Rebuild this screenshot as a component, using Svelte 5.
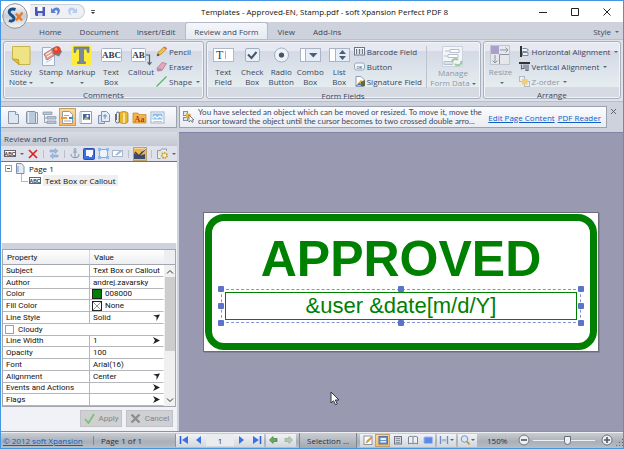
<script>
  const tabs = ['Home', 'Document', 'Insert/Edit', 'Review and Form', 'View', 'Add-Ins'];
  let activeTab = $state('Review and Form');

  const comments = [
    { icon: 'sticky', lines: ['Sticky', 'Note'], menu: true },
    { icon: 'stamp', lines: ['Stamp', ''], menu: true },
    { icon: 'markup', lines: ['Markup', ''], menu: true },
    { icon: 'textbox', lines: ['Text', 'Box'] },
    { icon: 'callout', lines: ['Callout', ''] }
  ];
  const drawing = [
    { icon: 'pencil', label: 'Pencil' },
    { icon: 'eraser', label: 'Eraser' },
    { icon: 'shape', label: 'Shape', menu: true }
  ];
  const fields = [
    { icon: 'textfield', lines: ['Text', 'Field'] },
    { icon: 'checkfield', lines: ['Check', 'Box'] },
    { icon: 'radiofield', lines: ['Radio', 'Button'] },
    { icon: 'combofield', lines: ['Combo', 'Box'] },
    { icon: 'listfield', lines: ['List', 'Box'] }
  ];
  const moreFields = [
    { icon: 'barcode', label: 'Barcode Field' },
    { icon: 'okbutton', label: 'Button' },
    { icon: 'signature', label: 'Signature Field' }
  ];
  const arrange = [
    { icon: 'halign', label: 'Horizontal Alignment', menu: true },
    { icon: 'valign', label: 'Vertical Alignment', menu: true },
    { icon: 'zorder', label: 'Z-order', menu: true, disabled: true }
  ];
  const panes = ['page', 'book', 'outline', 'review', 'picture', 'copies', 'attach', 'fonts', 'signed'];
  const properties = [
    { name: 'Subject', value: 'Text Box or Callout' },
    { name: 'Author', value: 'andrej.zavarsky' },
    { name: 'Color', value: '008000', swatch: 'green' },
    { name: 'Fill Color', value: 'None', swatch: 'none' },
    { name: 'Line Style', value: 'Solid', options: ['Solid', 'Dashed'] },
    { name: 'Cloudy', check: true },
    { name: 'Line Width', value: '1', more: true },
    { name: 'Opacity', value: '100' },
    { name: 'Font', value: 'Arial(16)' },
    { name: 'Alignment', value: 'Center', options: ['Left', 'Center', 'Right'] },
    { name: 'Events and Actions', value: '', more: true },
    { name: 'Flags', value: '', more: true }
  ];
  const views = ['vedit', 'vfit', 'vpage', 'vbook', 'vfull'];
  const handles = ['nw', 'n', 'ne', 'w', 'e', 'sw', 's', 'se'];
  let page = $state('1');
  let zoom = $state(57);
</script>

{#snippet icon(name, w, h)}
  <svg class="icon" width={w} height={h} viewBox="0 0 {w} {h}" aria-hidden="true">
    {#if name === 'sticky'}
      <path d="M1.500 1.500h17.500v18H8L1.500 14z" fill="#f0e384" stroke="#c9b44c" />
      <path d="M1.500 14l6 .5.5 5z" fill="#e0bd35" stroke="#b39523" stroke-width=".7" />
    {:else if name === 'stamp'}
      <path d="M1.500 2.500h8l4 4v14h-12z" fill="#f4f8fc" stroke="#9db0c6" />
      <path d="M4 14.500l7-4M5 17.500l6-3.500" stroke="#b9c8da" />
      <path d="M3 9l8-5 3 6-8 5z" fill="#e9a193" stroke="#b3675a" stroke-width=".8" />
      <path d="M5 9.500l5-3M6 12l5-3" stroke="#fff" />
      <path d="M11 3l6-1.500 4 5-3 5-6-2.500z" fill="#75798a" />
      <circle cx="16" cy="5" r="3.700" fill="#e5442a" />
      <circle cx="15" cy="4" r="1.500" fill="#ff8d6d" />
    {:else if name === 'markup'}
      <path d="M.5.500h20v20h-20z" fill="#ffec3a" />
      <path d="M3 2h15v5.500h-1.500l-1-3.500h-3v12.500l2 .5v1.500h-8V17l2-.5V4h-3l-1 3.500H3z" fill="#7a8a9c" stroke="#5b6a7c" stroke-width=".6" />
    {:else if name === 'textbox'}
      <rect x=".5" y="3.500" width="20" height="13" rx="1" fill="#fff" stroke="#a9b4c6" />
      <text x="10.500" y="13" text-anchor="middle" class="glyph">ABC</text>
    {:else if name === 'callout'}
      <rect x=".5" y="3.500" width="14" height="13" rx="1" fill="#fff" stroke="#a9b4c6" />
      <text x="7.500" y="13" text-anchor="middle" class="glyph">AB</text>
      <path d="M15 10h3.500v9M16.500 17l2 2.500 2-2.500" fill="none" stroke="#4b607f" stroke-width="1.200" />
    {:else if name === 'pencil'}
      <path d="M1 10l1-3.500L8 1l2.500 2L4 9z" fill="#f5c33b" stroke="#a77b2c" stroke-width=".7" />
      <path d="M7.500 1.500L9 .5l2 2-1 1z" fill="#d9607a" />
      <path d="M1 10l1-2.500 1.500 1.500z" fill="#3f2f2f" />
    {:else if name === 'eraser'}
      <path d="M1 7l5-5.500 4.500 1L6 9.500 1.500 10z" fill="#e0a6bd" stroke="#a3778f" stroke-width=".7" />
      <path d="M1 7l4 .5L6 9.500 1.500 10z" fill="#b98ba5" />
    {:else if name === 'shape'}
      <path d="M.5 10.500l10-10" stroke="#58b368" stroke-width="1.300" />
    {:else if name === 'textfield'}
      <rect x=".5" y="3.500" width="20" height="13" fill="#fff" stroke="#b0b9c9" />
      <text x="3" y="14" class="glyph t">T</text>
      <path d="M12.500 6v8" stroke="#8c98ab" stroke-width=".8" />
    {:else if name === 'checkfield'}
      <rect x="3.500" y="3.500" width="14" height="13" rx="1.500" fill="#eaf0f8" stroke="#a3aec2" />
      <path d="M6 9.500l3.500 3.500 5-6" fill="none" stroke="#44546e" stroke-width="2" />
    {:else if name === 'radiofield'}
      <circle cx="10.500" cy="10" r="7" fill="#eef3f9" stroke="#a3aec2" />
      <circle cx="10.500" cy="10" r="2.600" fill="#44546e" />
    {:else if name === 'combofield'}
      <rect x=".5" y="3.500" width="20" height="13" fill="#fff" stroke="#aab4c6" />
      <path d="M5.500 3.500h15v13h-15z" fill="#e6edf7" stroke="#aab4c6" />
      <path d="M9 8h8.500l-4.200 4.500z" fill="#4b5d7c" />
    {:else if name === 'listfield'}
      <rect x=".5" y="3.500" width="20" height="13" fill="#fff" stroke="#aab4c6" />
      <path d="M6.500 3.500h14v13h-14z" fill="#e6edf7" stroke="#aab4c6" />
      <path d="M10 9h7l-3.500-4zM10 11h7l-3.500 4z" fill="#4b5d7c" />
    {:else if name === 'barcode'}
      <rect x=".5" y="1.500" width="10" height="7.500" fill="#f5f7fa" stroke="#6d7688" />
      <path d="M2.500 3v5M5.500 3v5M8.500 3v5" stroke="#6d7688" />
      <path d="M4 3v5M7 3v5" stroke="#9ba4b4" stroke-width=".6" />
    {:else if name === 'okbutton'}
      <rect x=".5" y="2" width="10" height="7" rx="2" fill="#f4f7fb" stroke="#9ba7ba" />
      <text x="5.500" y="7.500" text-anchor="middle" class="tiny">OK</text>
    {:else if name === 'signature'}
      <path d="M2 .5h5l3 3v7H2z" fill="#fff" stroke="#8f9bb0" />
      <path d="M3 8l4-4 3 2-3 4z" fill="#e8a72c" />
      <path d="M1 10l5-3 1 2z" fill="#3a6bb3" />
      <path d="M7 6l4-2v6H7z" fill="#5a6a45" />
    {:else if name === 'manage'}
      <rect x=".5" y=".5" width="20" height="20" fill="#f3f5f9" stroke="#ccd2dd" />
      <path d="M8 3.500h9v3H8zM6 8.500h10v3H6zM3 5h5M2 10h4" fill="#fff" stroke="#b8bfcc" />
      <path d="M2 15.500h9v3H2z" fill="#dde2ea" stroke="#b8bfcc" />
      <path d="M10 16a3.500 3 0 0 1 6-2M19 15a3.500 3 0 0 1-6 3" fill="none" stroke="#9ccb98" stroke-width="2" />
    {:else if name === 'resize'}
      <rect x=".5" y=".5" width="19" height="19" fill="#e4e7ec" stroke="#c0c5ce" />
      <rect x="1" y="1" width="8" height="8" fill="#aba0cc" />
      <path d="M10 5h8M15.500 2.500L18 5l-2.500 2.500M5 10v8M2.500 15.500L5 18l2.500-2.500M9.500 19v-9.500H19" fill="none" stroke="#8d95a3" />
    {:else if name === 'halign'}
      <path d="M1 0h2v11H1z" fill="#333" />
      <path d="M3.500 2.500h4l2 1.500-2 1.500h-4M3.500 6.500h5.500v3H3.500z" fill="#eef2f7" stroke="#7c889c" />
    {:else if name === 'valign'}
      <path d="M0 1h11v2H0z" fill="#333" />
      <path d="M2.500 3.500v5M5 3.500v4h-3M7 3.500v6h2v-6" fill="none" stroke="#626c7d" stroke-width="1.200" />
    {:else if name === 'zorder'}
      <rect x=".5" y=".5" width="5" height="5" fill="#ebeef3" stroke="#b3bac6" />
      <rect x="5.500" y="5.500" width="5" height="5" fill="#ebeef3" stroke="#b3bac6" />
      <rect x="3" y="3" width="5.500" height="5.500" fill="#f0ce7d" />
    {:else if name === 'save'}
      <path d="M0 1h10v9H1L0 9z" fill="#4c57bd" />
      <path d="M2.500 1h5v4h-5z" fill="#fff" />
      <path d="M3 7h4.500v3H3z" fill="#cfd5ef" />
    {:else if name === 'undo'}
      <path d="M0 2v5h5L3.400 5.200C5 3.500 7 4.500 6.500 6.500L5.500 9.500C10 7.500 10 1.500 5.500 1.500 4 1.500 2.500 2.300 1.800 3.500z" fill="#5a82d6" />
    {:else if name === 'redo'}
      <path d="M10 2v5H5l1.600-1.800C5 3.500 3 4.500 3.500 6.500l1 3C0 7.500 0 1.500 4.500 1.500 6 1.500 7.500 2.300 8.200 3.500z" fill="#b5cdee" />
    {:else if name === 'page'}
      <path d="M2.500 1.500h7l3 3v9h-10z" fill="#dde6f1" stroke="#8796ad" />
      <path d="M9.500 1.500v3h3" fill="#fff" stroke="#8796ad" />
    {:else if name === 'book'}
      <rect x="2.500" y="1.500" width="9" height="12" rx="1" fill="#b9cadd" stroke="#7f90a8" />
      <path d="M11.500 2.500h2v11h-9" fill="none" stroke="#8a98ac" />
      <path d="M4.500 2v11" stroke="#e6eef6" />
    {:else if name === 'outline'}
      <path d="M1 2h9v2.500H1zM5 6.500h9V9H5zM5 11h9v2.500H5z" fill="#b9c5d5" stroke="#8593a9" stroke-width=".7" />
      <path d="M2.500 5v7.500H5M2.500 8H5" fill="none" stroke="#8593a9" stroke-width=".8" />
    {:else if name === 'review'}
      <path d="M2.500 1.500h7l3 3v9h-10z" fill="#fff" stroke="#9099aa" />
      <path d="M4 5.500h5M4 11h7" stroke="#9aa7bd" />
      <path d="M1 7h6v2H1z" fill="#ef9d28" />
      <path d="M9 7h4v2H9z" fill="#4b7fc6" />
    {:else if name === 'picture'}
      <path d="M2.500 1.500h11v12h-11z" fill="#fff" stroke="#8f9db2" />
      <path d="M1 2h3v11H1z" fill="#c8d5e4" />
      <rect x="5" y="4" width="7" height="6" fill="#416aa3" />
      <path d="M5 10l3-3 4 3z" fill="#c9b074" />
      <circle cx="9.500" cy="6" r="1.200" fill="#fff" />
    {:else if name === 'copies'}
      <path d="M2.500 5.500h6v8h-6z" fill="#d3e0ee" stroke="#7e93b0" />
      <path d="M5.500 1.500h5l3 3v7h-8z" fill="#e4eef8" stroke="#7e93b0" />
      <path d="M9 4v5M7 6h4" stroke="#6d8cb5" />
    {:else if name === 'attach'}
      <path d="M5 3c3-2 7-2 9 0v9c-2 2-6 2-9 0z" fill="#eab62f" stroke="#a97c1c" stroke-width=".7" />
      <path d="M10 3v10" stroke="#fbe49a" stroke-width="2" />
      <path d="M1.500 4v7a2 2 0 0 0 4 0V3.500a1.500 1.500 0 0 0-3 0V10" fill="none" stroke="#5f7390" />
    {:else if name === 'fonts'}
      <path d="M1 3h5l1 1.500h7V13H1z" fill="#f3b347" stroke="#c58323" stroke-width=".7" />
      <text x="7.500" y="11.500" text-anchor="middle" class="font">Aa</text>
    {:else if name === 'signed'}
      <rect x="1" y="2" width="13" height="11" fill="#fff" stroke="#9fb2c8" />
      <rect x="2.500" y="3.500" width="10" height="6" fill="#8fbdec" />
      <path d="M3 8l2-2 2 2 3-2 2 2" fill="none" stroke="#fff" stroke-width="1.200" />
      <path d="M3 11.500h9" stroke="#b9c6d6" />
    {:else if name === 'hint'}
      <rect x=".5" y=".5" width="4" height="4" fill="#dfe5ee" stroke="#8190a6" />
      <rect x=".5" y="6.500" width="4" height="3" fill="#dfe5ee" stroke="#8190a6" />
      <path d="M3 2l5 1-1 5-4-1z" fill="#e9b54a" />
      <path d="M6 4v7l1.800-1.500 1.500 2 .9-.6-1.300-2h2z" fill="#fff" stroke="#4d5768" stroke-width=".7" />
    {:else if name === 'abc'}
      <rect x=".5" y="1.500" width="11" height="6" fill="#fff" stroke="#626873" />
      <text x="6" y="6.500" text-anchor="middle" class="mini">ABC</text>
    {:else if name === 'delete'}
      <path d="M1 1l8 8M9 1L1 9" stroke="#d9241f" stroke-width="1.700" />
    {:else if name === 'swap'}
      <path d="M1 2h5V.5L9 3 6 5.500V4H1zM9 7H4V5.500L1 8l3 2.500V9h5z" fill="#9fbbe0" stroke="#7d9cc6" stroke-width=".5" />
    {:else if name === 'anchor'}
      <path d="M5 2.500V10M3 4h4M1 6c0 5 8 5 8 0" fill="none" stroke="#8e9db5" stroke-width="1.100" />
      <circle cx="5" cy="1.500" r="1" fill="none" stroke="#8e9db5" />
    {:else if name === 'note'}
      <rect x=".5" y=".5" width="11" height="11" rx="1" fill="#3e6fe0" stroke="#2a50b4" />
      <path d="M3 2h7v5H9v2H6V8H3z" fill="#f5f8ff" />
    {:else if name === 'select'}
      <rect x="1.500" y="1.500" width="8" height="8" fill="#edf5fc" stroke="#7fb0dd" />
      <path d="M0 0h3v3H0zM8 0h3v3H8zM0 8h3v3H0zM8 8h3v3H8z" fill="#94bce2" />
    {:else if name === 'editfield'}
      <rect x=".5" y="2.500" width="10" height="6" fill="#fff" stroke="#a8b7cc" />
      <path d="M3 7l5-5 2 1.500-5 4z" fill="#a6bbd9" />
    {:else if name === 'format'}
      <path d="M0 1h12v10H0z" fill="#f2b445" />
      <path d="M0 5l5 3 6-2v5H0z" fill="#3d4a6b" />
      <path d="M1 4l4 4L11 1" fill="none" stroke="#27406f" stroke-width="1.500" />
      <path d="M8 3l3-2" stroke="#fff3c8" />
    {:else if name === 'options'}
      <path d="M.5 2.500h3l1-1.500h5v2M.5 2.500v8h3" fill="#f6f1d8" stroke="#8e9aac" />
      <circle cx="7.500" cy="7.500" r="2.500" fill="#f9efc4" stroke="#c99417" stroke-width="1.600" stroke-dasharray="1.500 .7" />
    {:else if name === 'leaf'}
      <path d="M.5.500h5l2.500 3v7H.5z" fill="#e4edf6" stroke="#7f8fa6" />
      <path d="M2 3v6" stroke="#9cb6d4" stroke-width="1.500" />
    {:else if name === 'apply'}
      <path d="M1 6l3.500 4L10 1" fill="none" stroke="#7cc277" stroke-width="1.800" />
    {:else if name === 'cancel'}
      <path d="M1.500 1.500l8 8M9.500 1.500l-8 8" stroke="#8e8e8e" stroke-width="2.400" />
    {:else if name === 'first'}
      <path d="M1.500 1v8" stroke="#2d62d6" stroke-width="1.600" /><path d="M9 1v8L3 5z" fill="#3a72e4" />
    {:else if name === 'prev'}
      <path d="M7 1v8L2 5z" fill="#3a72e4" />
    {:else if name === 'next'}
      <path d="M2 1v8l5-4z" fill="#3a72e4" />
    {:else if name === 'last'}
      <path d="M8.500 1v8" stroke="#2d62d6" stroke-width="1.600" /><path d="M1 1v8l6-4z" fill="#3a72e4" />
    {:else if name === 'back'}
      <path d="M.5 5L4 1.500v2h4v3H4v2z" fill="#69a865" stroke="#40793d" stroke-width=".7" />
    {:else if name === 'forward'}
      <path d="M8.500 5L5 1.500v2H1v3h4v2z" fill="#b5ccb4" stroke="#92ab91" stroke-width=".7" />
    {:else if name === 'vedit'}
      <rect x="1" y="1" width="8" height="8.500" fill="#fff" stroke="#8b93a0" />
      <path d="M3 8l1-2.500L8 2l1 1-4 4z" fill="#e3a233" stroke="#9c6b33" stroke-width=".4" />
    {:else if name === 'vfit'}
      <rect x="1" y="1.500" width="8.500" height="7.500" fill="#6d93cc" stroke="#55739f" />
      <path d="M2.500 3h5.500v2H2.500zM2.500 6h5.500v1.500H2.500z" fill="#e5effb" />
    {:else if name === 'vpage'}
      <rect x="1.500" y="1.500" width="7" height="7.500" fill="#d0d5dc" stroke="#6d7583" />
      <path d="M3 3.500h4M3 5.500h4M3 7.500h4" stroke="#8b93a0" />
    {:else if name === 'vbook'}
      <path d="M.5 2c2-1 3.500-1 4.500 0 1-1 2.500-1 4.500 0v7c-2-1-3.500-1-4.500 0-1-1-2.500-1-4.500 0zM5 2v7" fill="#edf0f5" stroke="#7a8492" />
    {:else if name === 'vfull'}
      <rect x="1" y="2" width="8.500" height="6.500" rx="1" fill="#5c8ae8" stroke="#9bb8f0" />
    {:else if name === 'width'}
      <path d="M1.500 1v8M8.500 1v8" stroke="#6d8fc0" stroke-width="1.400" /><path d="M3 4h4v2.500H3z" fill="#a4bcdc" />
    {:else if name === 'loupe'}
      <circle cx="4.500" cy="4" r="3.300" fill="#d8e8fa" stroke="#7a92b4" />
      <path d="M7 6.500l2.500 3" stroke="#c49330" stroke-width="1.800" />
    {:else if name === 'minus'}
      <circle cx="6" cy="6" r="5" fill="#eceef1" stroke="#6e757f" /><path d="M3 6h6" stroke="#505761" stroke-width="1.600" />
    {:else if name === 'plus'}
      <circle cx="6" cy="6" r="5" fill="#eceef1" stroke="#6e757f" /><path d="M3 6h6M6 3v6" stroke="#505761" stroke-width="1.600" />
    {:else if name === 'grip'}
      <path d="M6 0h1v1H6zM3 3h1v1H3zM6 3h1v1H6zM0 6h1v1H0zM3 6h1v1H3zM6 6h1v1H6z" fill="#62676f" />
    {/if}
  </svg>
{/snippet}

{#snippet bigButton(item)}
  <button class="big" class:disabled={item.disabled}>
    {@render icon(item.icon, 21, 21)}
    <span>{item.lines[0]}</span>
    <span>{item.lines[1]}{#if item.menu}<i class="caret"></i>{/if}</span>
  </button>
{/snippet}

{#snippet smallButton(item)}
  <button class="small" class:disabled={item.disabled}>
    {@render icon(item.icon, 11, 11)}
    <span>{item.label}</span>
    {#if item.menu}<i class="caret"></i>{/if}
  </button>
{/snippet}

<div class="app">
  <header class="title">
    <button class="orb" aria-label="Application menu">
      <svg width="26" height="26" viewBox="0 0 26 26">
        <defs>
          <linearGradient id="orb" x1="0" y1="0" x2="0" y2="1">
            <stop offset="0" stop-color="#fff" />
            <stop offset=".5" stop-color="#c9ccd2" />
            <stop offset="1" stop-color="#f4f5f7" />
          </linearGradient>
        </defs>
        <circle cx="13" cy="13" r="12.300" fill="url(#orb)" stroke="#8b9099" />
        <path d="M13.500 6.500c-4-1.500-7 .5-6 3.500 1 2.500 5 3 4.500 6-.5 2-3 2.500-5 1.500" fill="none" stroke="#17518e" stroke-width="3" />
        <path d="M14 10.500l6 7M20.500 9.500l-6.500 8" stroke="#ee7a25" stroke-width="2.400" />
      </svg>
    </button>
    <div class="quick">
      <button aria-label="Save">{@render icon('save', 10, 11)}</button>
      <button aria-label="Undo">{@render icon('undo', 10, 11)}</button>
      <button aria-label="Redo">{@render icon('redo', 10, 11)}</button>
    </div>
    <button class="overflow" aria-label="Customize toolbar"><i class="caret"></i></button>
    <h1>Templates - Approved-EN, Stamp.pdf - soft Xpansion Perfect PDF 8</h1>
    <div class="window">
      <button aria-label="Minimize"><svg width="8" height="8"><path d="M0 4.500h8" stroke="#222" /></svg></button>
      <button aria-label="Maximize"><svg width="8" height="8"><path d="M.5.500h7v7h-7z" fill="none" stroke="#222" /></svg></button>
      <button aria-label="Close"><svg width="8" height="8"><path d="M.5.500l7 7M7.500.500l-7 7" stroke="#222" /></svg></button>
    </div>
  </header>

  <nav class="tabs">
    {#each tabs as tab}
      <button class:active={tab === activeTab} onclick={() => (activeTab = tab)}>{tab}</button>
    {/each}
    <button class="style">Style <i class="caret"></i></button>
  </nav>

  <div class="ribbon">
    <section class="comments">
      <div class="tools">
        {#each comments as item}{@render bigButton(item)}{/each}
        <div class="stack">{#each drawing as item}{@render smallButton(item)}{/each}</div>
      </div>
      <h2>Comments</h2>
    </section>
    <section class="fields">
      <div class="tools">
        {#each fields as item}{@render bigButton(item)}{/each}
        <div class="stack">{#each moreFields as item}{@render smallButton(item)}{/each}</div>
        <div class="manage">{@render bigButton({ icon: 'manage', lines: ['Manage', 'Form Data'], menu: true, disabled: true })}</div>
      </div>
      <h2>Form Fields</h2>
    </section>
    <section class="arrange">
      <div class="tools">
        {@render bigButton({ icon: 'resize', lines: ['Resize', ''], menu: true, disabled: true })}
        <div class="stack">{#each arrange as item}{@render smallButton(item)}{/each}</div>
      </div>
      <h2>Arrange</h2>
    </section>
  </div>

  <div class="body">
    <aside>
      <div class="panes">
        {#each panes as pane}
          <button class:on={pane === 'review'} aria-label={pane}>{@render icon(pane, 15, 15)}</button>
        {/each}
      </div>
      <div class="side">
        <h2>Review and Form</h2>
        <div class="actions">
          <button aria-label="Text box">{@render icon('abc', 12, 9)}</button>
          <i class="caret"></i>
          <button aria-label="Delete">{@render icon('delete', 10, 10)}</button>
          <i class="bar"></i>
          <button aria-label="Swap">{@render icon('swap', 10, 11)}</button>
          <i class="bar"></i>
          <button aria-label="Anchor">{@render icon('anchor', 10, 11)}</button>
          <button aria-label="Note">{@render icon('note', 12, 12)}</button>
          <button aria-label="Select">{@render icon('select', 11, 11)}</button>
          <button aria-label="Edit field">{@render icon('editfield', 11, 11)}</button>
          <i class="bar"></i>
          <button class="on" aria-label="Format">{@render icon('format', 12, 12)}</button>
          <i class="bar"></i>
          <button aria-label="Options">{@render icon('options', 11, 11)}</button>
          <i class="caret"></i>
        </div>
        <ul class="tree">
          <li><i class="fold"></i>{@render icon('leaf', 9, 11)}<span>Page 1</span></li>
          <li class="child"><i class="elbow"></i>{@render icon('abc', 12, 9)}<span class="picked">Text Box or Callout</span></li>
        </ul>
        <div class="grid">
          <table>
            <thead><tr><th>Property</th><th>Value</th></tr></thead>
            <tbody>
              {#each properties as row}
                <tr>
                  {#if row.check}
                    <td colspan="2"><label class="cell"><input type="checkbox" />{row.name}</label></td>
                  {:else}
                    <td>{row.name}</td>
                    <td>
                      <div class="cell">
                        {#if row.swatch}<i class="swatch {row.swatch}"></i>{/if}
                        {#if row.options}
                          <select aria-label={row.name} value={row.value}>
                            {#each row.options as option}<option>{option}</option>{/each}
                          </select>
                          <svg class="mark" width="7" height="7"><path d="M0 1.500l7-1L3.500 7V3z" fill="#222" /></svg>
                        {:else}
                          <span>{row.value}</span>
                        {/if}
                        {#if row.more}
                          <button class="mark" aria-label="Edit {row.name}"><svg width="7" height="7"><path d="M0 0l7 3.500L0 7l2-3.500z" fill="#222" /></svg></button>
                        {/if}
                      </div>
                    </td>
                  {/if}
                </tr>
              {/each}
            </tbody>
          </table>
          <div class="scroll">
            <svg width="6" height="4"><path d="M0 3.500l3-3 3 3" fill="none" stroke="#333" /></svg>
            <i></i>
            <svg width="6" height="4"><path d="M0 .5l3 3 3-3" fill="none" stroke="#333" /></svg>
          </div>
        </div>
        <div class="confirm">
          <button>{@render icon('apply', 11, 11)}Apply</button>
          <button>{@render icon('cancel', 11, 11)}Cancel</button>
        </div>
      </div>
    </aside>

    <main>
      <div class="notice">
        <div class="message">
          {@render icon('hint', 12, 12)}
          <p>You have selected an object which can be moved or resized. To move it, move the<br />cursor toward the object until the cursor becomes to two crossed double arro...</p>
          <a href="#edit">Edit Page Content</a>
          <a href="#reader">PDF Reader</a>
        </div>
        <button aria-label="Dismiss"><svg width="5" height="5"><path d="M0 0l5 5M5 0L0 5" stroke="#5d6470" /></svg></button>
      </div>
      <div class="canvas">
        <div class="sheet">
          <div class="stamp">
            <strong>APPROVED</strong>
            <div class="selection">
              <div class="text">&amp;user &amp;date[m/d/Y]</div>
              {#each handles as h}<i class="handle {h}"></i>{/each}
            </div>
          </div>
        </div>
        <svg class="pointer" width="10" height="15" viewBox="0 0 10 15"><path d="M1 1v11l2.500-2.200 2 4 1.800-.9-2-3.900H9z" fill="#fff" stroke="#33333f" /></svg>
      </div>
    </main>
  </div>

  <footer>
    <div class="copy"><a href="#about">© 2012 soft Xpansion</a></div>
    <div class="count">Page 1 of 1</div>
    <div class="group nav">
      <button aria-label="First page">{@render icon('first', 10, 10)}</button>
      <button aria-label="Previous page">{@render icon('prev', 10, 10)}</button>
      <input type="text" aria-label="Page number" bind:value={page} />
      <button aria-label="Next page">{@render icon('next', 10, 10)}</button>
      <button aria-label="Last page">{@render icon('last', 10, 10)}</button>
    </div>
    <div class="group">
      <button aria-label="Back">{@render icon('back', 9, 10)}</button>
      <button aria-label="Forward">{@render icon('forward', 9, 10)}</button>
    </div>
    <div class="mode">Selection ...</div>
    <div class="group views">
      {#each views as view}
        <button class:on={view === 'vfit'} aria-label={view}>{@render icon(view, 10, 10)}</button>
      {/each}
    </div>
    <div class="group menu"><button aria-label="Fit width">{@render icon('width', 10, 10)}<i class="caret"></i></button></div>
    <div class="group menu"><button aria-label="Zoom tool">{@render icon('loupe', 10, 10)}<i class="caret"></i></button></div>
    <div class="zoom">
      <output for="zoom">150%</output>
      <button aria-label="Zoom out">{@render icon('minus', 12, 12)}</button>
      <input id="zoom" type="range" aria-label="Zoom" min="0" max="100" bind:value={zoom} />
      <button aria-label="Zoom in">{@render icon('plus', 12, 12)}</button>
      {@render icon('grip', 7, 7)}
    </div>
  </footer>
</div>

<style>
  :global(body) { background: #ced2dc; }
  .app, .app * { box-sizing: border-box; }
  .app {
    display: flex;
    flex-direction: column;
    min-height: 100vh;
    border: 1px solid #4596e2;
    background: #ced2dc;
    color: #3a475c;
    font: 8px/9px "Open Sans", "Noto Sans", sans-serif;
  }
  button, input, select { margin: 0; padding: 0; border: 0; background: none; color: inherit; font: inherit; }
  h1, h2, p, ul { margin: 0; padding: 0; font-weight: 400; list-style: none; }
  h1, h2 { font-size: 8px; }
  svg { display: block; flex: none; overflow: visible; }
  a { color: #0f5fc8; }
  .glyph { font: bold 9px "Liberation Serif", serif; fill: #2f3a4c; }
  .glyph.t { font-size: 12px; font-weight: 400; }
  .tiny { font: bold 4px "Liberation Sans", sans-serif; fill: #67758e; }
  .mini { font: bold 5px "Liberation Sans", sans-serif; fill: #333; }
  .font { font: bold 8px "Liberation Serif", serif; fill: #b23a1c; }
  .caret { display: inline-block; flex: none; border: 2px solid transparent; border-top-color: #5c6678; border-bottom: 0; vertical-align: middle; margin-left: 2px; }

  .title { position: relative; display: flex; align-items: center; height: 21px; padding-left: 29px; background: #fff; color: #111; }
  .orb { position: absolute; left: 1px; top: 2px; z-index: 2; }
  .quick { display: flex; align-items: center; gap: 6px; height: 15px; padding: 0 7px 0 4px; border: 1px solid #c9cdd6; border-left-color: transparent; border-radius: 0 8px 8px 0; background: #eef0f4; }
  .overflow { margin-left: 6px; padding-top: 1px; border-top: 1px solid #555; line-height: 3px; }
  .overflow .caret { margin: 0; display: block; border-top-color: #333; }
  h1 { flex: 1; text-align: center; padding-left: 15px; }
  .window { display: flex; gap: 24px; padding-right: 12px; }

  .tabs { display: flex; align-items: stretch; height: 17px; padding-left: 29px; }
  .tabs button { padding: 0 8px; border: 1px solid transparent; border-bottom: 0; }
  .tabs button.active { border-color: #b4bac8; border-radius: 3px 3px 0 0; background: linear-gradient(#f4f6fa, #e6eaf2); margin: 0 1px; }
  .tabs .style { margin-left: auto; padding: 0 3px; }

  .ribbon { display: flex; gap: 2px; height: 63px; padding: 1px 2px 2px; border-top: 1px solid #b9bfcb; background: #dfe2e8; border-bottom: 1px solid #b9bec8; }
  .ribbon section { display: flex; flex-direction: column; border: 1px solid #a9b0be; border-radius: 3px; box-shadow: inset 0 0 0 1px #f2f4f8; background: linear-gradient(#e6e9f1 0 16%, #d4d9e5 17%, #e5edf0 80%, #d6dae3 81%); }
  .comments { flex: 201; }
  .fields { flex: 276; }
  .arrange { flex: 138; }
  .tools { display: flex; flex: 1; padding: 1px 0 0 2px; }
  .ribbon h2 { height: 12px; text-align: center; line-height: 11px; }
  .big { display: flex; flex-direction: column; align-items: center; justify-content: flex-start; width: 30px; padding-top: 2px; line-height: 10px; white-space: nowrap; }
  .big .icon { margin-bottom: 1px; }
  .big span { height: 10px; }
  .fields .big { width: 29px; }
  .disabled { color: #8e97a7; }
  .stack { display: flex; flex-direction: column; padding-top: 1px; white-space: nowrap; }
  .small { display: flex; align-items: center; gap: 2px; height: 15px; }
  .manage { margin: 3px 0 2px 4px; padding-left: 6px; border-left: 1px solid #bcc2ce; }
  .manage .big { width: 40px; padding: 0; }
  .arrange .stack { padding-left: 3px; }

  .body { display: flex; flex: 1; gap: 2px; padding-top: 4px; background: #ced2dc; }
  aside { display: flex; flex-direction: column; gap: 4px; width: 176px; }
  .panes { display: flex; height: 22px; align-items: center; gap: 1px; padding-left: 4px; border: 1px solid #9da3ae; border-left: 0; background: linear-gradient(#fbfcfe, #e5e8ef); }
  .panes button { padding: 1px; width: 17px; height: 18px; }
  .on { background: linear-gradient(#fbd9a0, #f9b85a); box-shadow: inset 0 0 0 1px #c2a06a; }
  .side { display: flex; flex: 1; flex-direction: column; background: #f0f2f7; }
  .side h2 { height: 14px; padding-left: 3px; line-height: 14px; background: linear-gradient(#d9dce4, #c2c7d2); }
  .actions { display: flex; align-items: center; gap: 3px; height: 16px; padding-left: 3px; border-bottom: 1px solid #6a6e98; background: #dfe2ea; }
  .actions .on { padding: 1px; margin: 0 -1px; }
  .actions .caret { margin: 0 1px; }
  .bar { width: 1px; height: 8px; margin: 0 2px; background: #b9bfcc; }
  .tree { flex: 1; background: #fff; color: #111; }
  .tree li { display: flex; align-items: center; height: 12px; padding-left: 4px; gap: 4px; }
  .tree li.child { padding-left: 20px; gap: 1px; }
  .fold { width: 7px; height: 7px; border: 1px solid #9aa0aa; background: linear-gradient(#555, #555) center / 3px 1px no-repeat; }
  .elbow { width: 7px; height: 8px; border: 1px solid #b5b8be; border-width: 0 0 1px 1px; align-self: flex-start; }
  .picked { padding: 1px 2px; margin-left: 1px; background: #efefef; }

  .grid { display: flex; margin: 6px 1px 0; border: 1px solid #a3a6ad; background: #fff; color: #111; box-shadow: 0 -6px #ced2dc; font: 8px/9px Roboto, "Liberation Sans", sans-serif; position: relative; }
  table { flex: 1; border-collapse: separate; border-spacing: 0; table-layout: fixed; height: 156px; }
  th { height: 15px; padding: 0 4px; border-right: 1px solid #d5d7dc; border-bottom: 1px solid #a3a6ad; background: linear-gradient(#fff, #eceef1); text-align: left; font-weight: 400; }
  th:first-child { width: 87px; }
  td { height: 11px; padding: 0 3px; border-bottom: 1px solid #b5b7bb; border-right: 1px solid #b5b7bb; white-space: nowrap; }
  td + td, td[colspan] { border-right-color: transparent; }
  th:last-child { border-right: 0; }
  td[colspan] { padding-left: 2px; }
  .cell { display: flex; align-items: center; height: 10px; }
  .cell input { appearance: none; width: 9px; height: 9px; margin-right: 4px; border: 1px solid #9b9ea4; background: #fff; }
  .cell select { appearance: none; flex: 1; }
  .mark { margin-left: auto; }
  .swatch { width: 10px; height: 10px; margin: 0 3px 0 -1px; border: 1px solid #222; background: #008000; }
  .swatch.none { background: linear-gradient(45deg, transparent 45%, #999 45% 55%, transparent 55%), linear-gradient(-45deg, #fff 45%, #999 45% 55%, #fff 55%); }
  .scroll { display: flex; flex-direction: column; align-items: center; width: 11px; padding: 20px 0 4px; background: linear-gradient(#eceef1 0 14px, #a3a6ad 14px 15px, #f0f0f0 15px); }
  .scroll i { width: 10px; height: 74px; margin: 3px 0 auto; background: #cdcdcd; }
  .confirm { display: flex; justify-content: flex-end; gap: 4px; padding: 3px 4px 4px; }
  .confirm button { display: flex; align-items: center; justify-content: center; gap: 4px; width: 42px; height: 17px; border: 1px solid #c0c2c6; background: #cfd0d2; color: #82858b; font: 8px/9px Roboto, sans-serif; }
  .confirm button:last-child { width: 47px; }

  main { display: flex; flex: 1; flex-direction: column; gap: 4px; min-width: 0; }
  .notice { display: flex; height: 22px; gap: 4px; }
  .message { display: flex; flex: 1; align-items: center; min-width: 0; padding: 0 5px 0 3px; border: 1px solid #9da3ae; background: linear-gradient(#fbfcfe, #e9ecf2); white-space: nowrap; }
  .message p { flex: 1; margin-left: 3px; font-family: Lato, "Open Sans", sans-serif; }
  .message a { margin-left: 3px; }
  .notice button { align-self: flex-start; padding: 3px 7px 0 0; }
  .canvas { position: relative; display: flex; flex: 1; align-items: center; justify-content: center; background: #9a99b2; box-shadow: inset 0 1px #8482a6; }
  .sheet { width: 396px; padding: 1px; border: 1px solid #6d6c79; background: #fff; box-shadow: 1px 1px #858499; }
  .stamp { padding: 11px 9px 20px; border: 7px solid #008000; border-radius: 19px; color: #008000; font-family: "Liberation Sans", Arial, sans-serif; text-align: center; }
  .stamp strong { display: block; margin-bottom: 3px; font-size: 50px; line-height: 54px; }
  .selection { position: relative; padding: 2px 3px; border: 1px dashed #7f93d8; }
  .text { border: 1px solid #008000; font-size: 22px; line-height: 26px; }
  .handle { position: absolute; width: 6px; height: 6px; border-radius: 1px; background: #5b74c9; }
  .nw, .n, .ne { top: -4px; }
  .sw, .s, .se { bottom: -4px; }
  .w, .e { top: calc(50% - 3px); }
  .nw, .w, .sw { left: -4px; }
  .ne, .e, .se { right: -4px; }
  .n, .s { left: calc(50% - 3px); }
  .pointer { position: absolute; left: 34%; bottom: 25px; }

  footer { display: flex; align-items: center; height: 17px; border-top: 1px solid #8d929b; background: linear-gradient(#eceef1 0 1px, #c9cdd3 1px, #aab0b8 60%, #b9bdc5); color: #28303c; white-space: nowrap; }
  .copy { width: 92px; padding-left: 2px; }
  .count { width: 82px; padding-left: 7px; border-left: 1px solid #7f858f; }
  .group { display: flex; align-items: center; height: 13px; margin-right: 2px; background: linear-gradient(#f0f2f5, #d3d7dd); }
  .group button { display: flex; align-items: center; justify-content: center; width: 15px; height: 13px; }
  .group.nav { border-left: 1px solid #8d929b; }
  .group input { width: 28px; height: 12px; background: #e9ebef; text-align: center; }
  .group.menu button { width: 19px; }
  .group.menu .caret { margin-left: 1px; }
  .mode { width: 58px; padding-left: 7px; border: 1px solid #7f858f; border-width: 0 1px; margin: 0 3px 0 1px; line-height: 15px; background: linear-gradient(#c9cdd3, #a2a8b0); }
  .zoom { display: flex; flex: 1; align-items: center; padding-left: 8px; }
  .zoom output { margin-right: auto; }
  .zoom input { appearance: none; width: 62px; height: 12px; margin: 0 6px 0 3px; background: linear-gradient(#eef0f2, #eef0f2) center / 100% 1px no-repeat; }
  .zoom input::-webkit-slider-thumb { appearance: none; width: 7px; height: 9px; border: 1px solid #666d78; border-radius: 0 0 4px 4px; background: #eef0f3; }
  .zoom > .icon { align-self: flex-end; margin-left: 3px; }
</style>
